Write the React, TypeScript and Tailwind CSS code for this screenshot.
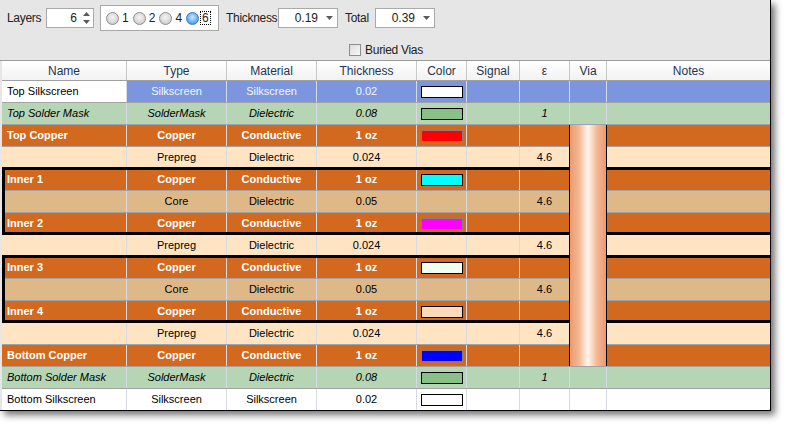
import React from "react";

type Row = {
  name: string;
  type: string;
  material: string;
  thick: string;
  swatch?: string;
  swatchBorder?: string;
  eps?: string;
  kind: "silk" | "mask" | "copper" | "prepreg" | "core" | "silkw";
};

const rows: Row[] = [
  { name: "Top Silkscreen", type: "Silkscreen", material: "Silkscreen", thick: "0.02", swatch: "#ffffff", swatchBorder: "#000000", kind: "silk" },
  { name: "Top Solder Mask", type: "SolderMask", material: "Dielectric", thick: "0.08", swatch: "#88c088", swatchBorder: "#000000", eps: "1", kind: "mask" },
  { name: "Top Copper", type: "Copper", material: "Conductive", thick: "1 oz", swatch: "#ff0000", swatchBorder: "#808080", kind: "copper" },
  { name: "", type: "Prepreg", material: "Dielectric", thick: "0.024", eps: "4.6", kind: "prepreg" },
  { name: "Inner 1", type: "Copper", material: "Conductive", thick: "1 oz", swatch: "#00ffff", swatchBorder: "#000000", kind: "copper" },
  { name: "", type: "Core", material: "Dielectric", thick: "0.05", eps: "4.6", kind: "core" },
  { name: "Inner 2", type: "Copper", material: "Conductive", thick: "1 oz", swatch: "#ff00ff", swatchBorder: "#808080", kind: "copper" },
  { name: "", type: "Prepreg", material: "Dielectric", thick: "0.024", eps: "4.6", kind: "prepreg" },
  { name: "Inner 3", type: "Copper", material: "Conductive", thick: "1 oz", swatch: "#f0fff0", swatchBorder: "#000000", kind: "copper" },
  { name: "", type: "Core", material: "Dielectric", thick: "0.05", eps: "4.6", kind: "core" },
  { name: "Inner 4", type: "Copper", material: "Conductive", thick: "1 oz", swatch: "#ffdab9", swatchBorder: "#000000", kind: "copper" },
  { name: "", type: "Prepreg", material: "Dielectric", thick: "0.024", eps: "4.6", kind: "prepreg" },
  { name: "Bottom Copper", type: "Copper", material: "Conductive", thick: "1 oz", swatch: "#0000ff", swatchBorder: "#808080", kind: "copper" },
  { name: "Bottom Solder Mask", type: "SolderMask", material: "Dielectric", thick: "0.08", swatch: "#88c088", swatchBorder: "#000000", eps: "1", kind: "mask" },
  { name: "Bottom Silkscreen", type: "Silkscreen", material: "Silkscreen", thick: "0.02", swatch: "#ffffff", swatchBorder: "#000000", kind: "silkw" },
];

const rowStyle: Record<Row["kind"], string> = {
  silk: "bg-[#7b96de] text-[#f4f6fc]",
  mask: "bg-[#b5d5b5] text-black italic",
  copper: "bg-[#d2691e] text-white font-bold",
  prepreg: "bg-[#ffe4c4] text-black",
  core: "bg-[#deb887] text-black",
  silkw: "bg-white text-black",
};

const headers = ["Name", "Type", "Material", "Thickness", "Color", "Signal", "ε", "Via", "Notes"];

function Radio({ checked, label }: { checked?: boolean; label: string }) {
  return (
    <div className="flex items-center">
      {checked ? (
        <div className="w-[13px] h-[13px] rounded-full border border-[#3b7bbf] bg-[radial-gradient(circle_at_50%_40%,#cfe8ff_0%,#6db3f2_55%,#2f7fd0_100%)]" />
      ) : (
        <div className="w-[13px] h-[13px] rounded-full border border-[#8e8e8e] bg-[radial-gradient(circle_at_50%_40%,#f4f4f4_0%,#d8d8d8_60%,#b8b8b8_100%)]" />
      )}
      {checked ? (
        <span className="ml-[1px] px-[1px] border border-dotted border-black leading-[12px]">{label}</span>
      ) : (
        <span className="ml-[3px]">{label}</span>
      )}
    </div>
  );
}

function DownArrow() {
  return (
    <svg width="7" height="4" viewBox="0 0 7 4">
      <path d="M0 0 L7 0 L3.5 4 Z" fill="#5a5a5a" />
    </svg>
  );
}

export default function App() {
  return (
    <div className="w-[786px] h-[425px] bg-white font-['Liberation_Sans',Arial,sans-serif] text-[11px] text-black">
      <div className="w-[771px] h-[411px] bg-[#e6e6e6] border-r border-b border-black shadow-[4px_4px_7px_rgba(0,0,0,0.55)] flex flex-col">
        {/* Toolbar */}
        <div className="h-[61px] border-b border-[#9c9c9c] flex flex-col text-[#222]">
          <div className="mt-[5px] h-[26px] flex items-center pl-[7px] text-[12px] tracking-[-0.3px]">
            <span className="w-[39px]">Layers</span>
            <div className="w-[48px] h-[20px] bg-white border border-[#a9a9a9] flex items-center justify-end pr-[3px] tracking-normal">
              <span className="mr-[6px]">6</span>
              <svg width="7" height="12" viewBox="0 0 7 12">
                <path d="M0 4 L7 4 L3.5 0 Z" fill="#5a5a5a" />
                <path d="M0 8 L7 8 L3.5 12 Z" fill="#5a5a5a" />
              </svg>
            </div>
            <div className="ml-[6px] w-[119px] h-[26px] bg-white border border-[#a9a9a9] flex items-center pl-[5px] gap-[4px] tracking-normal">
              <Radio label="1" />
              <Radio label="2" />
              <Radio label="4" />
              <Radio label="6" checked />
            </div>
            <span className="ml-[7px] w-[52px]">Thickness</span>
            <div className="w-[60px] h-[20px] bg-white border border-[#a9a9a9] flex items-center justify-end pr-[4px] tracking-normal">
              <span className="mr-[8px]">0.19</span>
              <DownArrow />
            </div>
            <span className="ml-[7px] w-[30px]">Total</span>
            <div className="w-[60px] h-[20px] bg-white border border-[#a9a9a9] flex items-center justify-end pr-[4px] tracking-normal">
              <span className="mr-[8px]">0.39</span>
              <DownArrow />
            </div>
          </div>
          <div className="mt-[10px] flex items-center justify-center pl-[2px]">
            <div className="w-[12px] h-[12px] border border-[#8e8e8e] bg-[linear-gradient(to_bottom_right,#dcdcdc,#f8f8f8)]" />
            <span className="ml-[4px] text-[12px] tracking-[-0.3px]">Buried Vias</span>
          </div>
        </div>

        {/* Table */}
        <div className="relative ml-[2px] w-[768px] flex flex-col">
          <div className="grid grid-cols-[125px_100px_90px_100px_50px_53px_50px_37px_163px] h-[20px] bg-[linear-gradient(to_bottom,#ffffff,#f2f2f2)] border-b border-[#a0a0a0] text-[#1f3552] text-[12px]">
            {headers.map((h, i) => (
              <div
                key={h}
                className={`flex items-center justify-center ${i < headers.length - 1 ? "border-r border-[#c8c8c8]" : ""}`}
              >
                {h}
              </div>
            ))}
          </div>
          {rows.map((r, ri) => {
            const last = ri === rows.length - 1;
            const cellBorder = "border-r border-[#d6dae2]";
            return (
              <div
                key={ri}
                className={`grid grid-cols-[125px_100px_90px_100px_50px_53px_50px_37px_163px] ${last ? "h-[21px]" : "h-[22px] border-b border-[#a2a2a2]"} ${rowStyle[r.kind]}`}
              >
                <div className={`flex items-center pl-[5px] ${cellBorder} ${r.kind === "silk" ? "bg-white text-black" : ""}`}>{r.name}</div>
                <div className={`flex items-center justify-center ${cellBorder}`}>{r.type}</div>
                <div className={`flex items-center justify-center ${cellBorder}`}>{r.material}</div>
                <div className={`flex items-center justify-center ${cellBorder}`}>{r.thick}</div>
                <div className={`flex items-center justify-center ${cellBorder}`}>
                  {r.swatch && (
                    <div
                      className="w-[42px] h-[12px] border"
                      style={{ background: r.swatch, borderColor: r.swatchBorder }}
                    />
                  )}
                </div>
                <div className={`${cellBorder}`} />
                <div className={`flex items-center justify-center ${cellBorder}`}>{r.eps ?? ""}</div>
                <div className={`${cellBorder}`} />
                <div />
              </div>
            );
          })}

          {/* Group outlines */}
          <div className="absolute left-0 top-[106px] w-[768px] h-[68px] border-l-[3px] border-t-[3px] border-b-[3px] border-black" />
          <div className="absolute left-0 top-[194px] w-[768px] h-[68px] border-l-[3px] border-t-[3px] border-b-[3px] border-black" />

          {/* Via barrel */}
          <div className="absolute left-[567px] top-[64px] w-[38px] h-[241px] border-l border-r border-black bg-[linear-gradient(to_right,#eb9a6e_0%,#f4b894_25%,#fff6ef_50%,#f4b894_75%,#eb9a6e_100%)]" />
        </div>
      </div>
    </div>
  );
}
